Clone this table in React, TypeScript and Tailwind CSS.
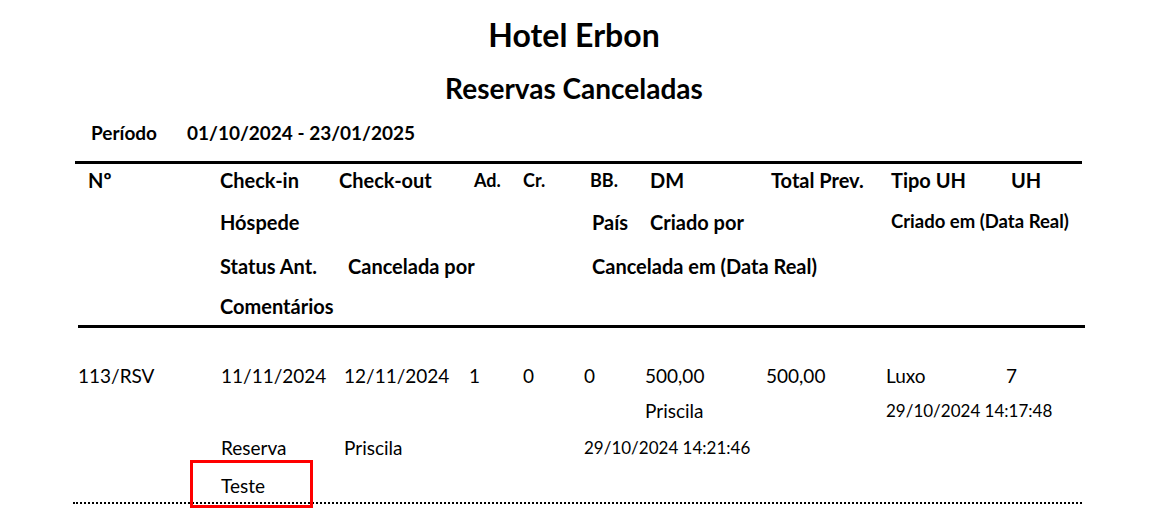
import React from "react";

export default function App() {
  return (
    <div className="relative w-[1157px] h-[512px] overflow-hidden bg-white text-black font-['Lato',sans-serif]">
      {/* Titles */}
      <div className="mt-[12px] h-[46px] w-[1148px] text-center text-[32px] font-bold leading-[46px]">Hotel Erbon</div>
      <div className="h-[60px] w-[1148px] text-center text-[28px] font-bold leading-[60px]">Reservas Canceladas</div>
      <div className="flex h-[30px] items-center pl-[91px] text-[19px] font-bold">
        <div className="w-[96px]">Período</div>
        <div>01/10/2024 - 23/01/2025</div>
      </div>

      {/* Header */}
      <div className="ml-[75px] mt-[13px] h-[3px] w-[1007px] bg-black" />
      <div className="text-[20px] font-bold">
        <div className="flex h-[32px] items-center pl-[88px]">
          <div className="w-[132px]">Nº</div>
          <div className="w-[119px]">Check-in</div>
          <div className="w-[135px]">Check-out</div>
          <div className="w-[49px] self-start pt-[3px] text-[18px]">Ad.</div>
          <div className="w-[67px] self-start pt-[3px] text-[18px]">Cr.</div>
          <div className="w-[60px] self-start pt-[3px] text-[18px]">BB.</div>
          <div className="w-[121px]">DM</div>
          <div className="w-[120px]">Total Prev.</div>
          <div className="w-[120px]">Tipo UH</div>
          <div>UH</div>
        </div>
        <div className="flex h-[52px] items-center pl-[220px]">
          <div className="w-[372px]">Hóspede</div>
          <div className="w-[58px]">País</div>
          <div className="w-[241px]">Criado por</div>
          <div className="text-[18.5px]">Criado em (Data Real)</div>
        </div>
        <div className="flex h-[36px] items-center pl-[220px]">
          <div className="w-[128px]">Status Ant.</div>
          <div className="w-[244px]">Cancelada por</div>
          <div>Cancelada em (Data Real)</div>
        </div>
        <div className="flex h-[41px] items-center pl-[220px] pt-[3px]">
          <div>Comentários</div>
        </div>
      </div>
      <div className="ml-[78px] h-[3px] w-[1007px] bg-black" />

      {/* Data */}
      <div className="text-[19px]">
        <div className="mt-[28px] flex h-[40px] items-center pl-[78px]">
          <div className="w-[143px]">113/RSV</div>
          <div className="w-[123px]">11/11/2024</div>
          <div className="w-[125px]">12/11/2024</div>
          <div className="w-[54px]">1</div>
          <div className="w-[61px]">0</div>
          <div className="w-[61px]">0</div>
          <div className="w-[121px]">500,00</div>
          <div className="w-[120px]">500,00</div>
          <div className="w-[120px]">Luxo</div>
          <div>7</div>
        </div>
        <div className="flex h-[30px] items-center pl-[645px]">
          <div className="w-[241px]">Priscila</div>
          <div className="text-[17px]">29/10/2024 14:17:48</div>
        </div>
        <div className="flex h-[44px] items-center pl-[221px]">
          <div className="w-[123px]">Reserva</div>
          <div className="w-[240px]">Priscila</div>
          <div className="text-[17px]">29/10/2024 14:21:46</div>
        </div>
        <div className="flex h-[32px] items-center pl-[221px]">
          <div>Teste</div>
        </div>
      </div>
      <div className="ml-[73px] w-[1009px] border-t-2 border-dotted border-black" />

      {/* Annotation box */}
      <div className="absolute left-[190px] top-[460px] h-[48px] w-[123px] border-[3px] border-[#ff0000]" />
    </div>
  );
}
